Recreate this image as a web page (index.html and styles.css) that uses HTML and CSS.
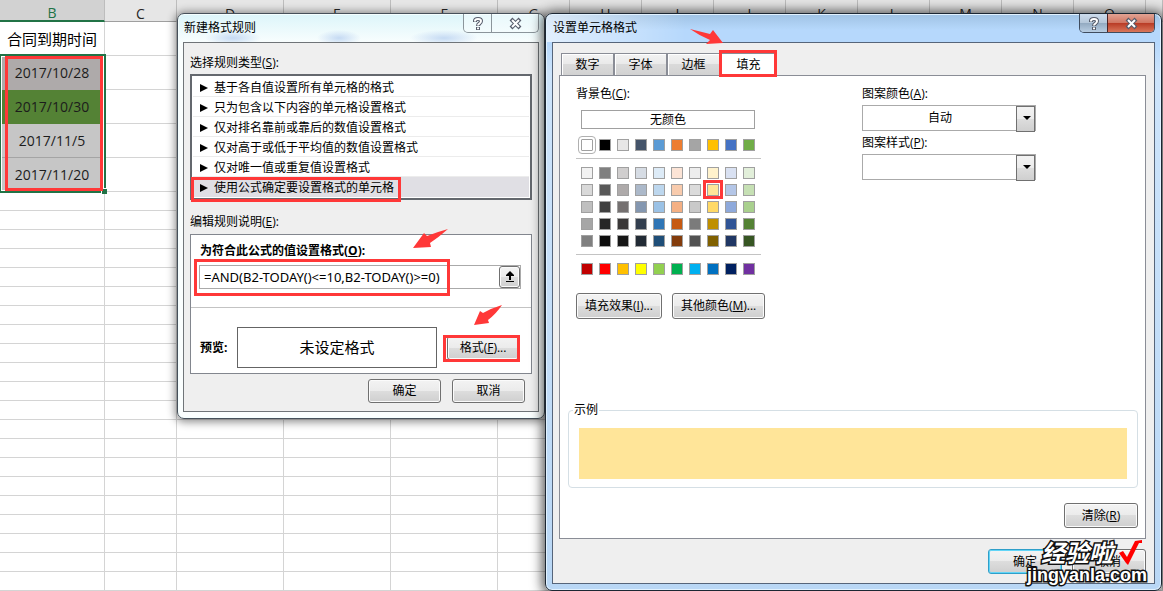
FILE: index.html
```html
<!DOCTYPE html>
<html lang="zh-CN">
<head>
<meta charset="utf-8">
<title>设置单元格格式</title>
<link rel="stylesheet" href="styles.css">
</head>
<body>
<div class="desktop">
  <table class="sheet">
    <colgroup>
      <col class="col-b"><col class="col-m"><col class="col-l"><col class="col-l"><col class="col-l">
      <col class="col-m"><col class="col-m"><col class="col-m"><col class="col-m"><col class="col-m">
      <col class="col-m"><col class="col-m"><col class="col-m"><col class="col-m"><col>
    </colgroup>
    <thead><tr><th class="active">B</th><th>C</th><th>D</th><th>E</th><th>F</th><th>G</th><th>H</th><th>I</th><th>J</th><th>K</th><th>L</th><th>M</th><th>N</th><th>O</th><th></th></tr></thead>
    <tbody id="rows"></tbody>
  </table>
  <div class="range"><span class="handle"></span></div>
  <div class="mark mark-range"></div>

  <section class="window rule-window" aria-labelledby="rule-title">
    <header class="titlebar">
      <h2 id="rule-title">新建格式规则</h2>
      <div class="caption">
        <button type="button" aria-label="帮助"><svg width="12" height="15" viewBox="0 0 12 15"><path class="glyph-edge" d="M3 6V5q0-2 3-2t3 2q0 1.500-1.500 2.500T6 10M6 11v3"/><path class="glyph-fill" d="M3 5.500V5q0-2 3-2t3 2q0 1.500-1.500 2.500T6 9.500M6 11.500v1.800"/></svg></button>
        <button type="button" class="close" aria-label="关闭"><svg width="15" height="13" viewBox="0 0 15 13"><path class="glyph-edge" d="M3 2l9 9M12 2l-9 9"/><path class="glyph-fill" d="M4 3l7 7M11 3l-7 7"/></svg></button>
      </div>
    </header>
    <div class="client rule-client">
      <div class="label" id="type-label">选择规则类型(<u>S</u>):</div>
      <ul class="rules" aria-labelledby="type-label">
        <li><button type="button">基于各自值设置所有单元格的格式</button></li>
        <li><button type="button">只为包含以下内容的单元格设置格式</button></li>
        <li><button type="button">仅对排名靠前或靠后的数值设置格式</button></li>
        <li><button type="button">仅对高于或低于平均值的数值设置格式</button></li>
        <li><button type="button">仅对唯一值或重复值设置格式</button></li>
        <li class="selected"><button type="button">使用公式确定要设置格式的单元格</button></li>
      </ul>
      <div class="label edit-label">编辑规则说明(<u>E</u>):</div>
      <div class="editor">
        <label class="label strong" for="formula">为符合此公式的值设置格式(<u>O</u>):</label>
        <div class="formula">
          <input id="formula" type="text" value="=AND(B2-TODAY()&lt;=10,B2-TODAY()&gt;=0)">
          <button type="button" class="btn pick" aria-label="选择区域"><svg width="10" height="12" viewBox="0 0 10 12"><path d="M5 0l4 4v1H6v4H4V5H1V4zM1 10h8v1H1z"/></svg></button>
        </div>
        <hr>
        <div class="preview">
          <span class="strong">预览:</span>
          <output>未设定格式</output>
          <button type="button" class="btn">格式(<u>F</u>)...</button>
        </div>
      </div>
      <footer class="actions">
        <button type="button" class="btn">确定</button>
        <button type="button" class="btn">取消</button>
      </footer>
    </div>
  </section>

  <section class="window cell-window" aria-labelledby="cell-title">
    <header class="titlebar">
      <h2 id="cell-title">设置单元格格式</h2>
      <div class="caption">
        <button type="button" aria-label="帮助"><svg width="12" height="15" viewBox="0 0 12 15"><path class="glyph-edge" d="M3 6V5q0-2 3-2t3 2q0 1.500-1.500 2.500T6 10M6 11v3"/><path class="glyph-fill" d="M3 5.500V5q0-2 3-2t3 2q0 1.500-1.500 2.500T6 9.500M6 11.500v1.800"/></svg></button>
        <button type="button" class="close" aria-label="关闭"><svg width="15" height="13" viewBox="0 0 15 13"><path class="glyph-edge" d="M3 2l9 9M12 2l-9 9"/><path class="glyph-fill" d="M4 3l7 7M11 3l-7 7"/></svg></button>
      </div>
    </header>
    <div class="client cell-client">
      <nav class="tabs" role="tablist">
        <button type="button" role="tab">数字</button>
        <button type="button" role="tab">字体</button>
        <button type="button" role="tab">边框</button>
        <button type="button" role="tab" class="current" aria-selected="true">填充</button>
      </nav>
      <div class="panel" role="tabpanel">
        <div class="columns">
          <div class="fill-column">
            <div class="label">背景色(<u>C</u>):</div>
            <button type="button" class="no-color">无颜色</button>
            <div class="swatches" id="theme"></div>
            <hr>
            <div class="swatches" id="tints"></div>
            <hr>
            <div class="swatches" id="standard"></div>
            <div class="fill-buttons">
              <button type="button" class="btn">填充效果(<u>I</u>)...</button>
              <button type="button" class="btn">其他颜色(<u>M</u>)...</button>
            </div>
          </div>
          <div class="pattern-column">
            <label class="label" for="pattern-color">图案颜色(<u>A</u>):</label>
            <div class="combo"><select id="pattern-color"><option>自动</option></select></div>
            <label class="label" for="pattern-style">图案样式(<u>P</u>):</label>
            <div class="combo"><select id="pattern-style"><option></option></select></div>
          </div>
        </div>
        <fieldset class="sample"><legend>示例</legend><div class="sample-fill"></div></fieldset>
        <button type="button" class="btn clear">清除(<u>R</u>)</button>
      </div>
      <footer class="actions">
        <button type="button" class="btn default">确定</button>
        <button type="button" class="btn">取消</button>
      </footer>
    </div>
  </section>

  <div class="mark mark-rule"></div>
  <div class="mark mark-formula"></div>
  <div class="mark mark-format"></div>
  <div class="mark mark-tab"></div>
  <div class="mark mark-swatch"></div>
  <svg class="arrow arrow-tab" width="34" height="18" viewBox="0 0 34 18"><path d="M0 1l20 5 3-4 10 13-17 1 4-4q-10-4-20-11z"/></svg>
  <svg class="arrow arrow-formula" width="36" height="20" viewBox="0 0 36 20"><path d="M35 0Q24 3 14 7l-3-3L0 19l18-1-1-4q9-6 18-14z"/></svg>
  <svg class="arrow arrow-format" width="30" height="21" viewBox="0 0 30 21"><path d="M28 0Q18 3 9 8L6 6 0 20l15-2-1-3q8-6 14-15z"/></svg>
  <div class="stamp">
    <div class="stamp-name">经验啦<svg width="24" height="26" viewBox="0 0 24 26"><path d="M0 13l4-2 4 6L16 1l7-1v3h-3L9 25 7 23z"/></svg></div>
    <div class="stamp-site">jingyanla.com</div>
  </div>
</div>
<script src="script.js"></script>
</body>
</html>
```
FILE: styles.css
```css
* { box-sizing: border-box; }
body { margin: 0; background: #fff; color: #000; font: 12px/20px "Open Sans", "Noto Sans CJK SC", sans-serif; }
button, input, select, output { font: inherit; color: inherit; margin: 0; }
button { padding: 0; }
h2 { margin: 0; font-size: 12px; font-weight: 400; }
hr { border: 0; border-top: 1px solid #c3c3c3; margin: 0; }
u { text-underline-offset: 1px; }
.desktop { position: relative; min-height: 100vh; overflow: hidden; }

.sheet { width: 100%; table-layout: fixed; border-collapse: separate; border-spacing: 0; font: 15px/20px "Open Sans", "Noto Sans CJK SC", sans-serif; }
.col-b { width: 105px; }
.col-m { width: 72px; }
.col-l { width: 107px; }
.sheet th { height: 22px; padding: 5px 0 0; font-size: 14px; line-height: 15px; font-weight: 400; color: #262626; background: #e6e6e6; border-right: 1px solid #bdbdbd; border-bottom: 1px solid #9f9f9f; }
.sheet .active { background: #d2d2d2; color: #217346; border-bottom: 2px solid #217346; }
.sheet td { height: 19px; padding: 0; text-align: center; border-right: 1px solid #d4d4d4; border-bottom: 1px solid #d4d4d4; }
.sheet .tall td { height: 34px; }
.sheet .date { font-size: 14px; color: #1c1c1c; }
.sheet .fill-gray { background: #aeaaaa; border-bottom-color: #aeaaaa; }
.sheet .fill-green { background: #548235; border-bottom-color: #548235; }
.sheet .fill-picked { background: #c6c6c6; border-bottom-color: #a4a4a4; }
.range { position: absolute; left: -1px; top: 54px; width: 107px; height: 139px; border: 2px solid #217346; box-shadow: inset 0 0 0 1px #fff; }
.handle { position: absolute; right: -3px; bottom: -3px; width: 6px; height: 6px; background: #217346; border: 1px solid #fff; border-width: 1px 0 0 1px; }

.window { position: absolute; display: flex; flex-direction: column; border: 1px solid #46505a; border-radius: 7px; }
.rule-window { left: 177px; top: 13px; width: 368px; padding: 0 5px 6px; background: radial-gradient(ellipse 28px 8px at 55px 24px, #c5daf3, transparent), radial-gradient(ellipse 22px 8px at 161px 24px, #c5daf3, transparent), radial-gradient(ellipse 34px 8px at 266px 24px, #c5daf3, transparent), linear-gradient(#dcf5fa, #fafefe 30px); box-shadow: inset 0 0 0 1px #f5ffff, 0 1px 8px 2px rgba(0, 0, 0, .45); }
.cell-window { left: 545px; top: 13px; width: 617px; padding: 0 6px 6px; border-color: #1c2733; background: linear-gradient(90deg, rgba(255, 255, 255, .6), transparent 140px) top / 100% 28px no-repeat, linear-gradient(#9fc2e4, #b6d8fc 16px, #b6d8fc 30px, #cde4fb 60px, #b9d7f5); box-shadow: inset 0 0 0 1px #e2f2ff, 0 1px 12px 3px rgba(0, 0, 0, .65); }
.titlebar { display: flex; justify-content: space-between; align-items: flex-start; height: 28px; }
.titlebar h2 { padding: 4px 0 0 1px; }
.caption { display: flex; border: 1px solid #8b959b; border-top: 0; border-radius: 0 0 5px 5px; overflow: hidden; }
.caption button { display: flex; align-items: center; justify-content: center; width: 27px; height: 18px; border: 0; background: rgba(255, 255, 255, .35); }
.caption .close { width: 47px; border-left: 1px solid #8b959b; }
.cell-window .caption { border-color: #3f4c5e; }
.cell-window .caption button { background: linear-gradient(#cddcec, #b4c6d9 50%, #92a9c0 50%, #b8cde2); }
.cell-window .caption .close { border-color: #4c2325; background: linear-gradient(#e2a393, #d07561 50%, #b83a24 50%, #d9765a); }
.glyph-edge, .glyph-fill { fill: none; stroke: #565c6b; stroke-width: 4; }
.glyph-fill { stroke: #fff; stroke-width: 2; }
.client { border: 1px solid #6f7478; background: #efefef; }
.label { display: block; height: 20px; }
.strong { font-weight: 700; }
.btn { height: 24px; border: 1px solid #707070; border-radius: 3px; background: linear-gradient(#f3f3f3, #ebebeb 50%, #dddddd 50%, #cfcfcf); box-shadow: inset 0 0 0 1px #fbfbfb; line-height: 20px; white-space: nowrap; }
.default { border-color: #2f9fc9; box-shadow: inset 0 0 0 1px #62d5f7; }
.actions { display: flex; justify-content: flex-end; gap: 11px; }
.actions .btn { width: 73px; }

.rule-client { padding: 10px 6px 8px; }
.rules { list-style: none; margin: 1px 0 0; padding: 1px; border: 2px solid #64686e; background: #fff; }
.rules li { height: 20px; border-bottom: 1px solid #ececec; }
.rules button { display: flex; align-items: center; gap: 6px; width: 100%; height: 19px; padding: 2px 0 0 7px; border: 0; background: none; }
.rules button::before { content: ""; border: 4px solid transparent; border-left: 8px solid #000; border-right: 0; }
.rules .selected { background: #e0dfe4; border-color: #e0dfe4; }
.edit-label { margin: 12px 0 2px; }
.editor { padding: 6px 0 5px; border: 1px solid #82868e; background: #fff; }
.editor > .label { margin-left: 9px; }
.formula { display: flex; height: 24px; margin: 4px 10px 18px 8px; border: 1px solid #aaa; }
.formula input { flex: 1; min-width: 0; padding: 0 4px; border: 0; outline: 0; background: none; font-family: "Noto Sans", sans-serif; font-size: 13px; }
.pick { display: flex; align-items: center; justify-content: center; width: 21px; height: 22px; }
.preview { display: flex; align-items: center; margin: 19px 12px 0 9px; }
.preview .strong { width: 37px; }
.preview output { width: 200px; height: 41px; border: 1px solid #646464; text-align: center; font-size: 15px; line-height: 38px; }
.preview .btn { flex: 1; margin-left: 10px; }
.rule-client .actions { margin: 5px 7px 0; }

.cell-client { padding: 10px 8px 9px 6px; border-color: #56657a; }
.tabs { display: flex; margin-left: 2px; }
.tabs button { width: 53px; height: 22px; border: 1px solid #8a8d96; border-bottom: 0; background: linear-gradient(#f3f3f3, #e9e9e9 50%, #dadada 50%, #d2d2d2); box-shadow: inset 1px 1px 0 #fff; }
.tabs .current { width: 57px; height: 23px; margin-bottom: -1px; background: #fff; position: relative; }
.panel { padding: 8px 7px 10px 8px; border: 1px solid #8a8d96; background: #fff; }
.columns { display: grid; grid-template-columns: 286px 1fr; padding-left: 8px; }
.fill-column hr { width: 185px; margin: 7px 0 8px; }
.no-color { display: block; width: 174px; height: 19px; margin: 6px 0 10px 5px; border: 1px solid #a0a0a0; background: #fff; line-height: 16px; }
.swatches { display: grid; grid-template-columns: repeat(10, 12px); gap: 5px 6px; margin-left: 5px; }
.swatches input { appearance: none; width: 12px; height: 12px; margin: 0; border: 1px solid #a0a0a0; }
.swatches input:checked { outline: 1px solid #b0b0b0; outline-offset: 2px; border-radius: 1px; }
.fill-buttons { display: flex; gap: 10px; margin-top: 18px; }
.fill-buttons .btn { height: 26px; padding: 0 8px; }
.pattern-column .label + .combo { margin: 1px 0 2px; }
.combo { position: relative; width: 174px; }
.combo select { appearance: none; display: block; width: 100%; height: 26px; padding: 0 18px 0 0; border: 1px solid #aaa; border-radius: 0; background: #fff; text-align: center; text-align-last: center; }
.combo::before { content: ""; position: absolute; right: 1px; top: 1px; width: 17px; height: 24px; border: 1px solid #707070; background: linear-gradient(#f3f3f3, #ebebeb 50%, #dddddd 50%, #cfcfcf); pointer-events: none; }
.combo::after { content: ""; position: absolute; right: 5px; top: 11px; border: 4px solid transparent; border-top-color: #000; border-bottom: 0; pointer-events: none; }
.sample { margin: 81px 0 15px; padding: 8px 10px; border: 1px solid #d5dfe5; border-radius: 4px; min-width: 0; }
.sample legend { margin-left: -6px; padding: 0 1px; height: 20px; }
.sample-fill { height: 51px; background: #ffe599; }
.clear { display: block; width: 74px; height: 25px; margin-left: auto; }
.cell-client .actions { gap: 10px; margin-top: 10px; }
.cell-client .actions .btn { width: 74px; height: 25px; }

.mark { position: absolute; border: 3px solid #ff3838; pointer-events: none; }
.mark-range { left: 5px; top: 56px; width: 98px; height: 135px; }
.mark-rule { left: 191px; top: 177px; width: 210px; height: 25px; }
.mark-formula { left: 194px; top: 259px; width: 256px; height: 37px; }
.mark-format { left: 443px; top: 335px; width: 77px; height: 27px; }
.mark-tab { left: 719px; top: 50px; width: 58px; height: 27px; }
.mark-swatch { left: 703px; top: 180px; width: 20px; height: 19px; }
.arrow { position: absolute; fill: #ff3838; }
.arrow-tab { left: 690px; top: 28px; }
.arrow-formula { left: 413px; top: 229px; }
.arrow-format { left: 474px; top: 305px; }
.stamp { position: absolute; right: 16px; bottom: 7px; width: 124px; color: #fff; -webkit-text-stroke: 3px #111; paint-order: stroke fill; }
.stamp-name { display: flex; gap: 6px; margin-left: 18px; font: italic 700 24px/24px "Noto Sans CJK SC", sans-serif; }
.stamp-name svg { fill: #f00; }
.stamp-site { font: 700 18px/18px "Liberation Sans", sans-serif; text-align: right; }
```
FILE: script.js
```js
const tall = [
  ["合同到期时间", ""],
  ["2017/10/28", "date fill-gray"],
  ["2017/10/30", "date fill-green"],
  ["2017/11/5", "date fill-picked"],
  ["2017/11/20", "date fill-picked"]
];
const blanks = "<td></td>".repeat(14);
document.getElementById("rows").innerHTML =
  tall.map(([text, cls]) => `<tr class="tall"><td class="${cls}">${text}</td>${blanks}</tr>`).join("") +
  `<tr><td></td>${blanks}</tr>`.repeat(21);

const palettes = {
  theme: "ffffff 000000 e7e6e6 44546a 5b9bd5 ed7d31 a5a5a5 ffc000 4472c4 70ad47",
  tints: "f2f2f2 808080 d0cece d6dce4 ddebf7 fce4d6 ededed fff2cc d9e1f2 e2efda " +
    "d9d9d9 595959 aeaaaa acb9ca bdd7ee f8cbad dbdbdb ffe699 b4c6e7 c6e0b4 " +
    "bfbfbf 404040 757171 8497b0 9bc2e6 f4b084 c9c9c9 ffd966 8ea9db a9d08e " +
    "a6a6a6 262626 3a3838 333f4f 2f75b5 c65911 7b7b7b bf8f00 305496 548235 " +
    "808080 0d0d0d 161616 222b35 1f4e78 833c0c 525252 806000 203764 375623",
  standard: "c00000 ff0000 ffc000 ffff00 92d050 00b050 00b0f0 0070c0 002060 7030a0"
};
for (const [id, list] of Object.entries(palettes)) {
  document.getElementById(id).innerHTML = list.split(" ").map(hex =>
    `<input type="radio" name="fill" aria-label="#${hex}" style="background:#${hex}"${hex === "ffffff" ? " checked" : ""}>`
  ).join("");
}
```
